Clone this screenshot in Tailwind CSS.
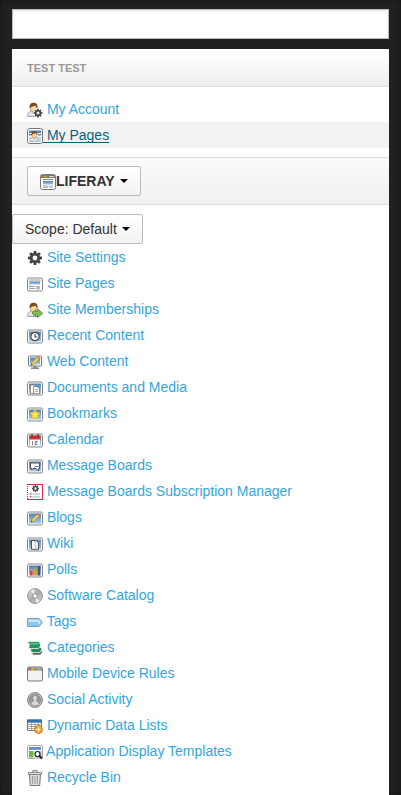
<!DOCTYPE html>
<html lang="en">
<head>
<meta charset="utf-8">
<meta name="viewport" content="width=device-width, initial-scale=1">
<title>Site Administration</title>
<script src="https://cdn.jsdelivr.net/npm/@tailwindcss/browser@4"></script>
</head>
<body class="bg-[#212121] font-['Liberation_Sans',Arial,sans-serif] text-sm text-[#333]">
<svg class="absolute size-0" aria-hidden="true">
  <defs>
    <linearGradient id="sky" x1="0" y1="0" x2="0" y2="1"><stop offset="0" stop-color="#5583b0"/><stop offset="1" stop-color="#a3cdec"/></linearGradient>
    <linearGradient id="metal" x1="0" y1="0" x2="1" y2="1"><stop offset="0" stop-color="#e4e4e4"/><stop offset=".5" stop-color="#aaa"/><stop offset="1" stop-color="#dcdcdc"/></linearGradient>
    <symbol id="frame" viewBox="0 0 16 16"><rect x=".5" y="2" width="15" height="13" rx="1.5" fill="#fff" stroke="#858585"/><rect x="2" y="3.5" width="12" height="10" fill="url(#sky)"/></symbol>
    <symbol id="cog" viewBox="0 0 16 16"><g fill="#444"><path fill-rule="evenodd" d="M8 3a5 5 0 1 0 0 10A5 5 0 1 0 8 3zm0 2.600a2.400 2.400 0 1 1 0 4.800 2.400 2.400 0 1 1 0-4.800z"/><path d="M6.700 1h2.600l.4 3H6.300zM6.700 15h2.600l.4-3H6.300zM1 6.700v2.600l3 .4V6.300zM15 6.700v2.600l-3 .4V6.300zM2.200 4L4 2.200l2 1.600L3.800 6zM13.800 4L12 2.200l-2 1.600L12.200 6zM2.200 12L4 13.800l2-1.600L3.800 10zM13.800 12L12 13.800l-2-1.600 2.200-2.200z"/></g></symbol>
    <symbol id="person" viewBox="0 0 16 16"><path d="M.7 14.500c-.3-3 1-4.700 3-5.200h5c2 .5 3.200 2 3 5.200z" fill="#dfe8ef" stroke="#8796a1" stroke-width=".8"/><path d="M4 9.300l2.300 3 2.300-3z" fill="#e9b878"/><ellipse cx="6.500" cy="6" rx="3.200" ry="3.800" fill="#f8d8a0" stroke="#b07a35" stroke-width=".6"/><path d="M2.800 6.500C2 2.500 4 .8 6.600.8s4.800 1.900 3.800 5.700C9.500 5.500 9.300 4 8.500 3.700 7 4.500 4 4 2.800 6.500z" fill="#7b4d22"/></symbol>
    <symbol id="pencil" viewBox="0 0 16 16"><path d="M4 12.300l1-2.900 5.700-5.700 2 2-5.800 5.600z" fill="#fbd34d" stroke="#9c7a32" stroke-width=".6"/><path d="M10 4.400l1.300-1.200 2 2L12 6.500z" fill="#ef8e8e" stroke="#a65c5c" stroke-width=".5"/><path d="M4 12.300l.5-1.500 1 1z" fill="#333"/></symbol>
  </defs>
</svg>
<div class="min-h-screen px-3 pt-[9px] shadow-[inset_0_0_5px_rgba(0,0,0,.5)]">
  <input type="text" aria-label="Search" class="block h-[30px] w-full border border-[#bbb] bg-white px-2 shadow-[inset_0_1px_2px_rgba(0,0,0,.1)] outline-none">
  <main class="mt-2.5 min-h-[calc(100vh-49px)] bg-white">
    <h2 class="border-y border-t-white border-b-[#ddd] bg-linear-to-b from-white to-[#eee] px-[15px] text-[11px] leading-9 font-bold text-[#999]">TEST TEST</h2>
    <ul class="py-[9px] leading-[26px]">
      <li class="h-[26px] px-[15px]"><a href="#" class="text-[#34a6dc]"><svg class="inline-block size-4 align-[-4px]" viewBox="0 0 16 16"><use href="#person"/><use href="#cog" x="6" y="6" width="10" height="10" stroke="#fff" stroke-width="2"/><use href="#cog" x="6" y="6" width="10" height="10"/></svg> My Account</a></li>
      <li class="h-[26px] bg-[#f2f2f2] px-[15px]"><a href="#" class="text-[#06637c] underline underline-offset-2 [text-decoration-skip-ink:none]"><svg class="inline-block size-4 align-[-4px]" viewBox="0 0 16 16"><rect x=".5" y=".5" width="15" height="15" rx="2" fill="#fff" stroke="#777"/><path d="M2 2.500h12v2.500H2zM2 6h3v1.500H2zM11 6h3v1.500h-3z" fill="#4d87bd"/><path d="M2 8.500h12V14H2z" fill="#c6dcec"/><use href="#person" x="2.500" y="2.500" width="12" height="12"/></svg> My Pages</a></li>
    </ul>
    <div class="border-y border-[#ddd] bg-linear-to-b from-[#fafafa] to-[#f0f0f0] px-[15px] py-2">
      <button type="button" class="flex h-[30px] items-center rounded-[2px] border border-[#bbb] bg-linear-to-b from-white to-[#f2f2f2] px-3 font-bold"><svg class="mt-0.5 size-4" viewBox="0 0 16 16"><rect x=".5" y=".5" width="15" height="15" rx="2" fill="#fff" stroke="#777"/><path d="M1 1h14v3H1z" fill="#777"/><path d="M2 1.800h1.500v1.500H2z" fill="#e65a44"/><path d="M4 1.800h1.500v1.500H4z" fill="#f3c33d"/><path d="M6 1.800h1.500v1.500H6z" fill="#67b643"/><path d="M9 2h5v1H9z" fill="#ddd"/><path d="M3 5h10v1H3z" fill="#888"/><path d="M3 7h10v3.500H3z" fill="url(#sky)"/><path d="M3 11.500h5v1H3zM3 13.200h5v.8H3z" fill="#999"/><path d="M9 11.500h4V14H9z" fill="#b7cee8"/></svg>LIFERAY<span class="ml-[5px] border-x-4 border-t-4 border-x-transparent border-t-black"></span></button>
    </div>
    <button type="button" class="mt-[9px] flex h-[30px] items-center rounded-[2px] border border-[#bbb] bg-linear-to-b from-white to-[#f2f2f2] px-3">Scope: Default<span class="ml-[5px] border-x-4 border-t-4 border-x-transparent border-t-black"></span></button>
    <ul class="px-[15px] leading-[26px] text-[#34a6dc] [&_li]:h-[26px] [&_svg]:inline-block [&_svg]:size-4 [&_svg]:align-[-4px]">
      <li><a href="#"><svg viewBox="0 0 16 16"><use href="#cog"/></svg> Site Settings</a></li>
      <li><a href="#"><svg viewBox="0 0 16 16"><rect x=".5" y="2" width="15" height="13" rx="1.500" fill="#fff" stroke="#858585"/><path d="M2 3.500h12v1H2z" fill="#999"/><path d="M3 5.500h10v3H3z" fill="url(#sky)"/><path d="M3 10h5v1H3zM3 12h5v1H3zM2 5h.6v8.500H2z" fill="#999"/><path d="M9 10h4v3.500H9z" fill="#a6bfdc"/></svg> Site Pages</a></li>
      <li><a href="#"><svg viewBox="0 0 16 16"><use href="#person"/><path d="M5 11.300L8.500 8v1.500h2V7l5.200 4.300-5.200 4.300V13h-2v1.500z" fill="#83bd55" stroke="#467d2b" stroke-width=".8"/></svg> Site Memberships</a></li>
      <li><a href="#"><svg viewBox="0 0 16 16"><use href="#frame"/><circle cx="8" cy="8.500" r="4.200" fill="#fff" stroke="#444" stroke-width="1.200"/><path d="M8 6v3h2.300" fill="none" stroke="#444" stroke-width="1.100"/></svg> Recent Content</a></li>
      <li><a href="#"><svg viewBox="0 0 16 16"><rect x="1.500" y="2" width="13" height="10" rx=".8" fill="#fff" stroke="#777"/><path d="M3 3.500h10v7H3z" fill="url(#sky)"/><path d="M6.500 12h3v1.500H12V15H4v-1.500h2.500z" fill="#888"/><use href="#pencil" y="-1"/></svg> Web Content</a></li>
      <li><a href="#"><svg viewBox="0 0 16 16"><use href="#frame"/><path d="M3.500 5h4L9 6.500v7H3.500z" fill="#fff" stroke="#777" stroke-width=".8"/><path d="M6.500 6.500H10l2.500 2v5.300h-6z" fill="#fff" stroke="#777" stroke-width=".8"/><path d="M8 9.500h3M8 11.500h3" stroke="#888" stroke-width=".7"/></svg> Documents and Media</a></li>
      <li><a href="#"><svg viewBox="0 0 16 16"><use href="#frame"/><path d="M8 3.500l1.500 3.200 3.400.4-2.500 2.400.6 3.500-3-1.700-3 1.700.6-3.500-2.500-2.400 3.400-.4z" fill="#ffe34d" stroke="#eec02a" stroke-width=".8"/></svg> Bookmarks</a></li>
      <li><a href="#"><svg viewBox="0 0 16 16"><use href="#frame"/><path d="M3 4h10v9.500H3z" fill="#fff"/><path d="M2.500 3.500h11v4h-11z" fill="#c93636"/><path d="M5 2v3M11 2v3" stroke="#7d2424" stroke-width="1.200"/><path d="M5.500 9v4M7.500 9.300h2.500v1.500H8v1.700h2.500" fill="none" stroke="#666" stroke-width=".8"/></svg> Calendar</a></li>
      <li><a href="#"><svg viewBox="0 0 16 16"><use href="#frame"/><path d="M3.500 5h9v5.500h-1V13L9 10.500H6L4.800 12v-1.500H3.500z" fill="#fff" stroke="#444" stroke-width=".9"/><path d="M6.800 10.500L8 8.500h4.500" fill="none" stroke="#777" stroke-width=".8"/></svg> Message Boards</a></li>
      <li><a href="#"><svg viewBox="0 0 16 16"><rect x=".5" y=".5" width="15" height="15" fill="#fff" stroke="#cc2944"/><path d="M.5 1v14" stroke="#fff" stroke-dasharray="1 1"/><use href="#cog" x="4.500" y=".5" width="8" height="8"/><path d="M3 9h1.500v1.500H3zM3 12h1.500v1.500H3z" fill="#d94b5c"/><path d="M5.500 9H13v1.800H5.500zM5.500 12H13v1.800H5.500z" fill="#c5d2df"/></svg> Message Boards Subscription Manager</a></li>
      <li><a href="#"><svg viewBox="0 0 16 16"><use href="#frame"/><use href="#pencil"/></svg> Blogs</a></li>
      <li><a href="#"><svg viewBox="0 0 16 16"><use href="#frame"/><path d="M4.500 4.500H9L11.500 7v6.300h-7z" fill="#fff" stroke="#444" stroke-width=".9"/><path d="M7 5.500c4 2-1 3 2 5l-1 2" fill="none" stroke="#a3ad9a"/></svg> Wiki</a></li>
      <li><a href="#"><svg viewBox="0 0 16 16"><use href="#frame"/><path d="M3 9h2.500v4.500H3z" fill="#d5413a"/><path d="M5.800 7H8v6.500H5.800z" fill="#f0932c"/><path d="M8.300 5.500h2.200v8H8.300z" fill="#9cb52f"/><path d="M10.800 4h2.400v9.500h-2.400z" fill="#4b4a9e"/></svg> Polls</a></li>
      <li><a href="#"><svg viewBox="0 0 16 16"><circle cx="8" cy="8" r="7.400" fill="url(#metal)" stroke="#888" stroke-width=".9"/><path d="M8 8L3.500 2.500 6.500 1zM8 8l4.500 5.500-3 1.500z" fill="#fff" opacity=".7"/><circle cx="8" cy="8" r="2.300" fill="#fff" stroke="#888" stroke-width=".9"/></svg> Software Catalog</a></li>
      <li><a href="#"><svg viewBox="0 0 16 16"><path d="M.5 4.500H12l3.500 4-3.500 4H.5z" fill="#8fc9ea" stroke="#6d9fbf"/><path d="M1.500 5.500h10l2.300 2.500H1.500z" fill="#c5e7f9"/><circle cx="12.300" cy="8.500" r=".9" fill="#fff"/></svg> Tags</a></li>
      <li><a href="#"><svg viewBox="0 0 16 16"><g stroke="#eef8f0" stroke-width=".8"><path d="M4.500 9H13l2.500 3-2 3H5.500z" fill="#555"/><path d="M2.500 6h9.500l3 3-2 3.500H4.500z" fill="#258a5b"/><path d="M.5 1.500h11l2.500 3.500-2.500 3.500h-10l1-3.500z" fill="#27925f"/></g><path d="M2 3h8.500l1.200 1.400H2.800z" fill="#67bf90"/></svg> Categories</a></li>
      <li><a href="#"><svg viewBox="0 0 16 16"><rect x=".5" y="1" width="15" height="14" rx="1.500" fill="#f3f2f0" stroke="#777"/><path d="M1 1.500h14v3H1z" fill="#888"/><path d="M2 2h2v1.800H2z" fill="#ee4d38"/><path d="M4.500 2h2v1.800h-2z" fill="#f4bd35"/><path d="M7 2h2v1.800H7z" fill="#6abd43"/><path d="M10 2h4v1.500h-4z" fill="#aaa"/></svg> Mobile Device Rules</a></li>
      <li><a href="#"><svg viewBox="0 0 16 16"><circle cx="8" cy="8" r="7.400" fill="#ccc" stroke="#777"/><circle cx="8" cy="8" r="5.700" fill="#999" stroke="#777" stroke-width=".6"/><path d="M4 12c.3-1.800 1.200-2.200 2.800-2.700v-1C5 6 6 3.500 8 3.500s3 2.500 1.200 4.800v1c1.600.5 2.500.9 2.800 2.700-2 2-6 2-8 0z" fill="#ddd" stroke="#777" stroke-width=".4"/></svg> Social Activity</a></li>
      <li><a href="#"><svg viewBox="0 0 16 16"><path d="M.5 2h14v10.500H.5z" fill="#fff" stroke="#777"/><path d="M0 1.500h15v3.200H0z" fill="#3272a8"/><path d="M1 6.500h13M1 8.500h13M1 10.500h13M4.500 5v7.500M8 5v7.500M11.500 5v7.500" stroke="#888" stroke-width=".7"/><circle cx="11.500" cy="11.500" r="4" fill="#f9a52c" stroke="#c57416" stroke-width=".8"/><path d="M12.300 8.300L9.500 12h1.700l-.6 2.800 3-3.900h-1.800z" fill="#fff"/></svg> Dynamic Data Lists</a></li>
      <li><a href="#"><svg viewBox="0 0 16 16"><rect x=".5" y="1.500" width="15" height="13" rx="1.500" fill="#fff" stroke="#aaa"/><path d="M2 3h12v2.800H2z" fill="#5b8fc5"/><path d="M2 7h4.500v6.500H2z" fill="#6cb744"/><path d="M7.500 7H15v8H7.500z" fill="#ccc"/><circle cx="10.500" cy="10" r="2.500" fill="#fff" stroke="#222" stroke-width="1.200"/><path d="M12.300 11.800l2.700 2.700" stroke="#222" stroke-width="2"/></svg> Application Display Templates</a></li>
      <li><a href="#"><svg viewBox="0 0 16 16"><path d="M2.500 4.500h11l-.8 11H3.300z" fill="#ddd" stroke="#777"/><path d="M1.500 2.500h13v2h-13z" fill="#eee" stroke="#777" stroke-width=".9"/><path d="M5.800 2.300V.7h4.400v1.600" fill="none" stroke="#777"/><path d="M5.500 6l.3 8M8 6v8M10.500 6l-.3 8" stroke="#999"/></svg> Recycle Bin</a></li>
    </ul>
  </main>
</div>
</body>
</html>
